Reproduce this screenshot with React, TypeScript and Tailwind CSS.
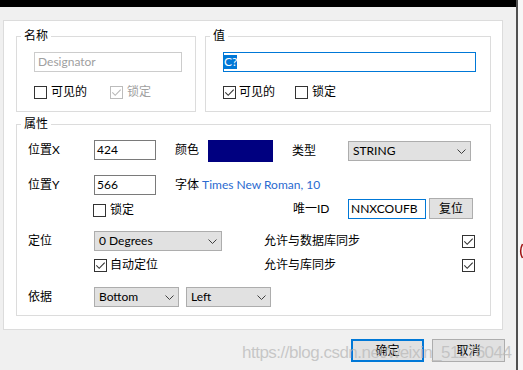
import React from "react";

function Check({ checked = false, disabled = false }: { checked?: boolean; disabled?: boolean }) {
  return (
    <span
      className={
        disabled
          ? "flex h-[13px] w-[13px] shrink-0 items-center justify-center border border-[#bcbcbc] bg-white"
          : "flex h-[13px] w-[13px] shrink-0 items-center justify-center border border-[#333333] bg-white"
      }
    >
      {checked && (
        <svg width="11" height="11" viewBox="0 0 11 11">
          <path
            d="M1.3 5.4 L4.2 8.3 L9.7 2.6"
            fill="none"
            stroke={disabled ? "#b8b8b8" : "#333333"}
            strokeWidth="1.1"
          />
        </svg>
      )}
    </span>
  );
}

function Chevron() {
  return (
    <svg width="9" height="5" viewBox="0 0 9 5">
      <path d="M0.5 0.5 L4.5 4.5 L8.5 0.5" fill="none" stroke="#404040" strokeWidth="1" />
    </svg>
  );
}

function Select({ value, w }: { value: string; w: string }) {
  return (
    <div
      className={
        "flex h-[20px] items-center justify-between border border-[#adadad] bg-[#e1e1e1] pl-[4px] pr-[4px] leading-[18px] " +
        w
      }
    >
      <span>{value}</span>
      <Chevron />
    </div>
  );
}

function TextBox({ value, w }: { value: string; w: string }) {
  return (
    <div className={"h-[20px] border border-[#7a7a7a] bg-white pl-[2px] leading-[18px] " + w}>{value}</div>
  );
}

export default function App() {
  return (
    <div className="relative flex h-[370px] w-[523px] overflow-hidden font-['Lato','Noto_Sans_CJK_SC',sans-serif] text-[12px] text-black">
      <div className="flex h-full w-[516px] flex-col bg-[#f0f0f0]">
        <div className="h-[7px] bg-black" />
        <div className="ml-[3px] mt-[13px] h-[310px] w-[500px] border border-[#dcdcdc] bg-white">
          <div className="ml-[12px] mt-[7px] flex h-[84px] gap-[9px]">
            <fieldset className="w-[180px] border border-[#dcdcdc]">
              <legend className="ml-[4px] px-[3px] leading-[16px]">名称</legend>
              <div className="ml-[17px] mt-[8px] h-[20px] w-[148px] border border-[#cccccc] pl-[3px] leading-[18px] text-[#a0a0a0]">
                Designator
              </div>
              <div className="ml-[17px] mt-[12px] flex items-center leading-[16px]">
                <div className="flex w-[76px] items-center gap-[4px]">
                  <Check />
                  <span>可见的</span>
                </div>
                <div className="flex items-center gap-[4px] text-[#a0a0a0]">
                  <Check checked disabled />
                  <span>锁定</span>
                </div>
              </div>
            </fieldset>
            <fieldset className="w-[286px] border border-[#dcdcdc]">
              <legend className="ml-[4px] px-[3px] leading-[16px]">值</legend>
              <div className="ml-[17px] mt-[8px] flex h-[20px] w-[253px] items-center border border-[#0078d7] bg-white">
                <span className="bg-[#0078d7] leading-[14px] text-white">C?</span>
              </div>
              <div className="ml-[17px] mt-[12px] flex items-center leading-[16px]">
                <div className="flex w-[72px] items-center gap-[3px]">
                  <Check checked />
                  <span>可见的</span>
                </div>
                <div className="flex items-center gap-[4px]">
                  <Check />
                  <span>锁定</span>
                </div>
              </div>
            </fieldset>
          </div>

          <fieldset className="ml-[12px] mt-[4px] h-[200px] w-[475px] border border-[#dcdcdc]">
            <legend className="ml-[4px] px-[3px] leading-[16px]">属性</legend>
            <div className="flex flex-col pl-[11px] pt-[8px]">
              <div className="flex h-[22px] items-start">
                <span className="w-[66px] leading-[20px]">位置X</span>
                <TextBox value="424" w="w-[62px]" />
                <span className="ml-[19px] w-[33px] leading-[20px]">颜色</span>
                <div className="h-[22px] w-[65px] bg-[#000080]" />
                <span className="ml-[19px] w-[56px] leading-[21px]">类型</span>
                <div className="mt-[1px]">
                  <Select value="STRING" w="w-[123px]" />
                </div>
              </div>

              <div className="mt-[13px] flex h-[20px] items-start">
                <span className="w-[66px] leading-[20px]">位置Y</span>
                <TextBox value="566" w="w-[62px]" />
                <span className="ml-[19px] leading-[20px]">
                  字体 <span className="text-[#2a6ad0]">Times New Roman, 10</span>
                </span>
              </div>

              <div className="mt-[3px] flex h-[21px] items-start">
                <div className="w-[65px]" />
                <div className="mt-[4px] flex w-[200px] items-center gap-[4px] leading-[16px]">
                  <Check />
                  <span>锁定</span>
                </div>
                <span className="w-[55px] leading-[21px]">唯一ID</span>
                <div className="mt-[1px] h-[20px] w-[78px] border border-[#0078d7] pl-[2px] leading-[18px]">NNXCOUFB</div>
                <div className="ml-[3px] flex h-[21px] w-[44px] items-center justify-center border border-[#adadad] bg-[#e1e1e1]">
                  复位
                </div>
              </div>

              <div className="mt-[12px] flex h-[20px] items-center">
                <span className="w-[66px] leading-[20px]">定位</span>
                <Select value="0 Degrees" w="w-[128px]" />
                <div className="ml-[42px] flex w-[211px] items-center justify-between">
                  <span className="leading-[16px]">允许与数据库同步</span>
                  <Check checked />
                </div>
              </div>

              <div className="mt-[7px] flex h-[14px] items-center">
                <div className="w-[66px]" />
                <div className="flex w-[170px] items-center gap-[3px] leading-[16px]">
                  <Check checked />
                  <span>自动定位</span>
                </div>
                <div className="flex w-[211px] items-center justify-between">
                  <span className="leading-[16px]">允许与库同步</span>
                  <Check checked />
                </div>
              </div>

              <div className="mt-[15px] flex h-[20px] items-center">
                <span className="w-[66px] leading-[20px]">依据</span>
                <Select value="Bottom" w="w-[85px]" />
                <div className="ml-[7px]">
                  <Select value="Left" w="w-[85px]" />
                </div>
              </div>
            </div>
          </fieldset>
        </div>

        <div className="mt-[9px] flex justify-end gap-[8px] pr-[11px]">
          <div className="flex h-[23px] w-[73px] items-center justify-center border-2 border-[#0078d7] bg-[#e1e1e1]">
            确定
          </div>
          <div className="flex h-[23px] w-[73px] items-center justify-center border border-[#adadad] bg-[#e1e1e1]">
            取消
          </div>
        </div>
      </div>
      <div className="w-[2px] bg-[#505050]" />
      <div className="relative flex-1 bg-[#f7f7f7]">
        <svg className="absolute left-[0px] top-[243px]" width="5" height="16" viewBox="0 0 5 16">
          <path d="M4.5 1 Q0.8 8 4.5 15" fill="none" stroke="#a01010" strokeWidth="1.5" />
        </svg>
      </div>
      <div className="pointer-events-none absolute left-[242px] top-[340px] font-['Liberation_Sans',sans-serif] text-[17px] tracking-[-0.5px] text-[rgba(185,185,185,0.75)]">
        https://blog.csdn.net/weixin_51176044
      </div>
    </div>
  );
}
